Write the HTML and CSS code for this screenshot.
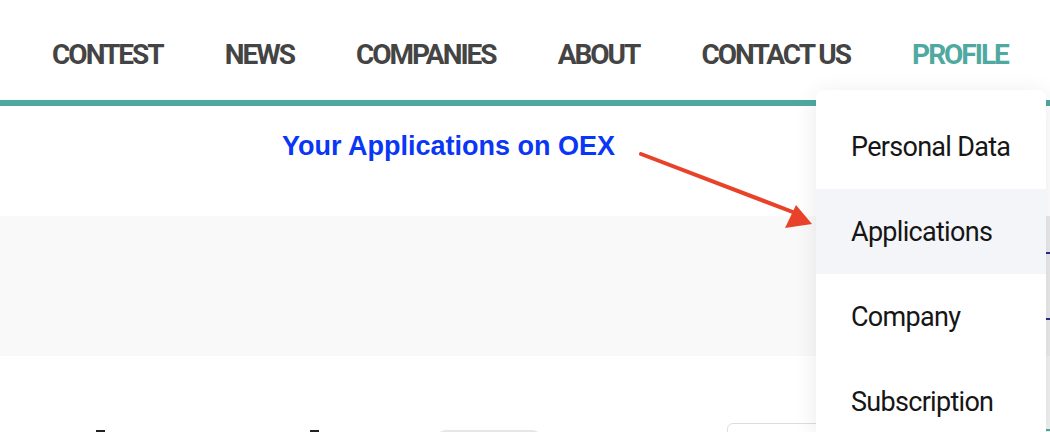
FILE: index.html
```html
<!DOCTYPE html>
<html>
<head>
<meta charset="utf-8">
<link rel="stylesheet" href="styles.css">
</head>
<body>
<header class="topbar">
  <nav class="nav">
    <span class="nav-item">CONTEST</span>
    <span class="nav-item">NEWS</span>
    <span class="nav-item">COMPANIES</span>
    <span class="nav-item">ABOUT</span>
    <span class="nav-item">CONTACT US</span>
    <span class="nav-item active">PROFILE</span>
  </nav>
</header>
<div class="rule"></div>
<main>
  <section class="intro">
    <h1 class="title">Your Applications on OEX</h1>
  </section>
  <section class="band"></section>
  <section class="lower">
    <div class="marks">
      <span class="mark m1"></span>
      <span class="mark m2"></span>
      <span class="pill"></span>
      <span class="box"></span>
    </div>
  </section>
</main>
<div class="edge">
  <span class="edge-line e1"></span>
  <span class="edge-line e2"></span>
  <span class="edge-line e3"></span>
</div>
<ul class="dropdown">
  <li class="dd-item">Personal Data</li>
  <li class="dd-item selected">Applications</li>
  <li class="dd-item">Company</li>
  <li class="dd-item">Subscription</li>
</ul>
<svg class="arrow" width="200" height="100" viewBox="0 0 200 100">
  <line x1="3" y1="5" x2="160" y2="65" stroke="#e8432a" stroke-width="4" stroke-linecap="round"/>
  <polygon points="174,75 147,79 158,56" fill="#e8432a"/>
</svg>
</body>
</html>
```
FILE: styles.css
```css
* { box-sizing: border-box; }
html, body { margin: 0; padding: 0; }
body {
  width: 1050px;
  height: 432px;
  overflow: hidden;
  background: #fff;
  position: relative;
  font-family: Roboto, "Liberation Sans", sans-serif;
}
.topbar {
  height: 100px;
  display: flex;
  align-items: center;
}
.nav {
  display: flex;
  align-items: center;
  padding-left: 52px;
  gap: 62px;
  padding-top: 8px;
}
.nav-item {
  font-family: Roboto, sans-serif;
  font-weight: 700;
  font-size: 28px;
  letter-spacing: -2px;
  color: #444;
}
.nav-item.active { color: #4fa9a1; }
.rule {
  height: 6px;
  background: #4fa8a0;
}
.intro {
  height: 110px;
  display: flex;
  align-items: center;
  padding-left: 282px;
}
.title {
  margin: 0;
  font-family: "Liberation Sans", Arial, sans-serif;
  font-weight: 700;
  font-size: 27px;
  color: #0a36f5;
  padding-bottom: 30px;
}
.band {
  height: 140px;
  background: #f9f9f9;
}
.lower {
  height: 76px;
  overflow: hidden;
}
.marks { position: relative; height: 100%; }
.mark {
  position: absolute;
  top: 74px;
  width: 9px;
  height: 2px;
  background: #222;
}
.m1 { left: 96px; }
.m2 { left: 310px; }
.pill {
  position: absolute;
  top: 74px;
  left: 436px;
  width: 106px;
  height: 20px;
  border-radius: 10px;
  background: #e6e6e6;
}
.box {
  position: absolute;
  top: 67px;
  left: 727px;
  width: 200px;
  height: 40px;
  border: 1px solid #ddd;
  border-radius: 6px;
}
.edge {
  position: absolute;
  left: 1046px;
  top: 216px;
  width: 4px;
  height: 216px;
  background: linear-gradient(#e9e9e9 0, #e9e9e9 140px, #f0f0f0 140px);
}
.edge-line {
  position: absolute;
  left: 0;
  width: 4px;
  height: 2px;
  background: #2b2b8a;
}
.e1 { top: 36px; }
.e2 { top: 102px; }
.e3 { top: 213px; background: #4fa8a0; }
.dropdown {
  position: absolute;
  left: 816px;
  top: 90px;
  width: 230px;
  height: 342px;
  margin: 0;
  padding: 14px 0 0;
  list-style: none;
  background: #fff;
  border-radius: 8px 8px 0 0;
  box-shadow: 0 4px 24px rgba(0,0,0,0.09);
  overflow: hidden;
}
.dd-item {
  height: 85px;
  display: flex;
  align-items: center;
  padding-left: 35px;
  font-family: Roboto, sans-serif;
  font-size: 27px;
  letter-spacing: -0.7px;
  color: #161616;
}
.dd-item.selected { background: #f4f5f9; }
.arrow {
  position: absolute;
  left: 638px;
  top: 149px;
}
```
